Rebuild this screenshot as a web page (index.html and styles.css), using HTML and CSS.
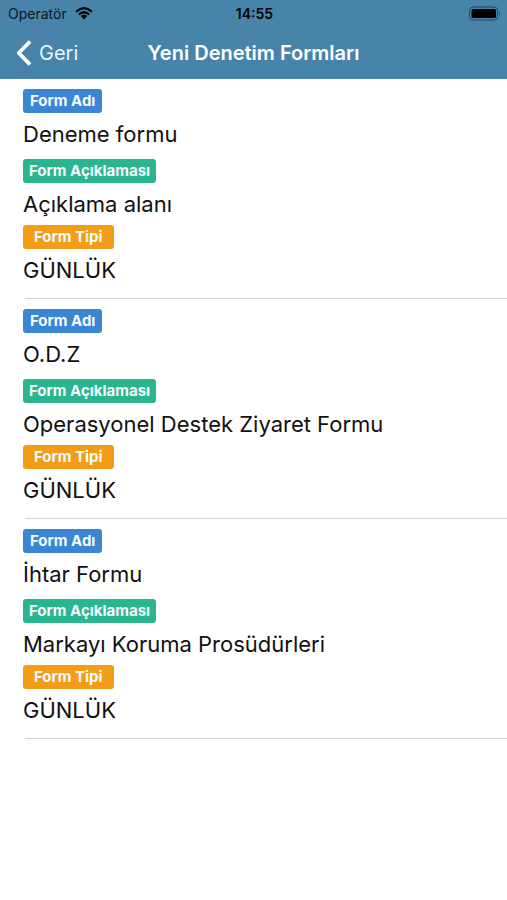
FILE: index.html
```html
<!DOCTYPE html>
<html lang="tr">
<head>
<meta charset="utf-8">
<meta name="viewport" content="width=device-width, initial-scale=1">
<title>Yeni Denetim Formları</title>
<link rel="stylesheet" href="styles.css">
</head>
<body>
<header class="header">
  <div class="status">
    <div class="carrier">
      <span>Operatör</span>
      <svg class="wifi" viewBox="0 0 18 13" aria-hidden="true">
        <path d="M1.2 4.6Q9-2.2 16.8 4.6M3.8 7.5Q9 3 14.2 7.5" fill="none" stroke="#000" stroke-width="2.2"/>
        <path d="M5.8 9.1Q9 6.5 12.2 9.1L9 12.4Z"/>
      </svg>
    </div>
    <time class="clock">14:55</time>
    <svg class="battery" viewBox="0 0 32 15" aria-hidden="true">
      <rect x="0.500" y="1" width="28" height="13" rx="3.500" fill="none" stroke="#24445a"/>
      <rect x="2.500" y="3" width="24.500" height="9" rx="1.500"/>
      <path d="M30 5.500Q32 7.500 30 9.500Z" fill="#24445a"/>
    </svg>
  </div>
  <nav class="nav">
    <a class="back" href="#">
      <svg class="chevron" viewBox="0 0 16 26" aria-hidden="true"><path d="M14 1.500L2.800 13L14 24.500" fill="none" stroke="#fff" stroke-width="3.800" stroke-linejoin="round"/></svg>
      <span>Geri</span>
    </a>
    <h1 class="title">Yeni Denetim Formları</h1>
  </nav>
</header>
<main class="list">
  <article class="item">
    <span class="tag name">Form Adı</span>
    <p class="value first">Deneme formu</p>
    <span class="tag desc">Form Açıklaması</span>
    <p class="value">Açıklama alanı</p>
    <span class="tag type">Form Tipi</span>
    <p class="value">GÜNLÜK</p>
  </article>
  <article class="item">
    <span class="tag name">Form Adı</span>
    <p class="value first">O.D.Z</p>
    <span class="tag desc">Form Açıklaması</span>
    <p class="value">Operasyonel Destek Ziyaret Formu</p>
    <span class="tag type">Form Tipi</span>
    <p class="value">GÜNLÜK</p>
  </article>
  <article class="item">
    <span class="tag name">Form Adı</span>
    <p class="value first">İhtar Formu</p>
    <span class="tag desc">Form Açıklaması</span>
    <p class="value">Markayı Koruma Prosüdürleri</p>
    <span class="tag type">Form Tipi</span>
    <p class="value">GÜNLÜK</p>
  </article>
</main>
</body>
</html>
```
FILE: styles.css
```css
* { box-sizing: border-box; }
body {
  margin: 0;
  background: #fff;
  color: #111;
  font-family: Inter, "Liberation Sans", sans-serif;
}
.header { background: #4883a9; }
.status {
  display: grid;
  grid-template-columns: 1fr auto 1fr;
  align-items: center;
  height: 27px;
  padding: 0 6px 0 8px;
  color: #000;
  font-size: 14px;
}
.carrier { display: flex; align-items: center; gap: 8px; color: #0b1a25; }
.wifi { width: 18px; height: 13px; }
.clock { font-weight: 600; }
.battery { width: 32px; height: 15px; justify-self: end; }
.nav {
  display: grid;
  grid-template-columns: 1fr auto 1fr;
  align-items: center;
  height: 52px;
  padding: 0 16px;
  color: #fff;
}
.back {
  display: flex;
  align-items: center;
  gap: 7px;
  color: #e8f5fc;
  font-size: 20px;
  text-decoration: none;
}
.chevron { width: 16px; height: 26px; }
.title { margin: 0; font-size: 20px; font-weight: 600; }
.item {
  display: flex;
  flex-direction: column;
  align-items: flex-start;
  padding: 10px 0 0 23px;
}
.item::after {
  content: "";
  align-self: stretch;
  margin: 7px 0 0 2px;
  border-bottom: 1px solid #d2d2d4;
}
.tag {
  padding: 0 7px;
  border-radius: 3px;
  color: #f4fcff;
  font-size: 15px;
  font-weight: 700;
  line-height: 24px;
}
.name { background: #3a86d2; }
.desc { padding: 0 6px; background: #29b68e; }
.type { padding: 0 11px; background: #f29c17; }
.value { margin: 0; font-size: 22px; line-height: 42px; }
.first { margin-bottom: 4px; }
```
